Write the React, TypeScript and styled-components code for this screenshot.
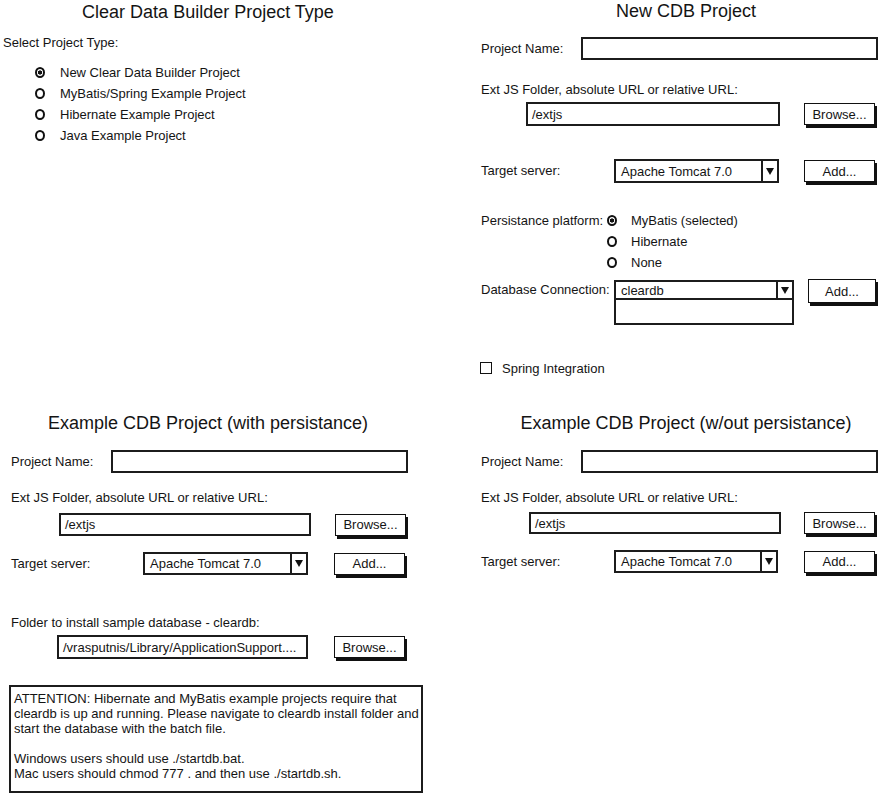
import React from 'react';
import styled, { createGlobalStyle } from 'styled-components';

const GlobalStyle = createGlobalStyle`
  html, body {
    margin: 0;
    padding: 0;
    background: #fff;
  }
  body {
    font-family: "Liberation Sans", Arial, sans-serif;
    color: #141414;
  }
`;

const Page = styled.div`
  display: grid;
  grid-template-columns: 470px 423px;
  grid-template-rows: 400px 393px;
  width: 893px;
  height: 793px;
  overflow: hidden;
`;

const Panel = styled.section`
  display: flex;
  flex-direction: column;
  min-width: 0;
`;

const Title = styled.h2<{ $width: number; $top?: number }>`
  margin: ${p => p.$top ?? 0}px 0 0;
  width: ${p => p.$width}px;
  font-size: 18px;
  font-weight: normal;
  line-height: 22px;
  text-align: center;
  white-space: nowrap;
`;

const Fields = styled.div<{ $indent?: number }>`
  display: flex;
  flex-direction: column;
  padding-left: ${p => p.$indent ?? 11}px;
`;

const Row = styled.div<{ $top: number; $indent?: number; $start?: boolean }>`
  display: flex;
  align-items: ${p => (p.$start ? 'flex-start' : 'center')};
  margin-top: ${p => p.$top}px;
  padding-left: ${p => p.$indent ?? 0}px;
`;

const Label = styled.div<{ $width: number; $line?: number }>`
  flex: 0 0 ${p => p.$width}px;
  font-size: 13px;
  line-height: ${p => p.$line ?? 16}px;
  white-space: nowrap;
`;

const Caption = styled.div<{ $top: number }>`
  margin-top: ${p => p.$top}px;
  font-size: 13px;
  line-height: 16px;
  white-space: nowrap;
`;

const TextBox = styled.div<{ $width: number; $height?: number }>`
  box-sizing: border-box;
  width: ${p => p.$width}px;
  height: ${p => p.$height ?? 23}px;
  border: 2px solid #1c1c1c;
  padding: 0 4px;
  display: flex;
  align-items: center;
  font-size: 13px;
  background: #fff;
  white-space: nowrap;
  overflow: hidden;
`;

const Button = styled.button<{ $gap: number; $width?: number; $height?: number; $top?: number }>`
  box-sizing: border-box;
  width: ${p => p.$width ?? 71}px;
  height: ${p => p.$height ?? 22}px;
  margin: ${p => p.$top ?? 0}px 0 0 ${p => p.$gap}px;
  padding: 0;
  border: 1.5px solid #111;
  box-shadow: 2px 3px 0 #111;
  background: #fff;
  font-family: inherit;
  font-size: 13px;
  color: #141414;
`;

const Select = styled.div<{ $width: number; $height?: number }>`
  box-sizing: border-box;
  width: ${p => p.$width}px;
  height: ${p => p.$height ?? 23}px;
  border: 2px solid #1c1c1c;
  display: flex;
  font-size: 13px;
  background: #fff;
`;

const SelectValue = styled.span`
  flex: 1;
  display: flex;
  align-items: center;
  padding-left: 5px;
  white-space: nowrap;
`;

const SelectArrow = styled.span`
  flex: 0 0 14px;
  border-left: 2px solid #1c1c1c;
  display: flex;
  align-items: center;
  justify-content: center;

  &::before {
    content: '';
    width: 0;
    height: 0;
    border-left: 4.5px solid transparent;
    border-right: 4.5px solid transparent;
    border-top: 7px solid #111;
  }
`;

const ListBox = styled.div<{ $width: number }>`
  box-sizing: border-box;
  width: ${p => p.$width}px;
  height: 25px;
  border: 2px solid #1c1c1c;
  border-top: none;
`;

const Stack = styled.div`
  display: flex;
  flex-direction: column;
`;

const RadioGroup = styled.div<{ $top?: number; $indent?: number }>`
  display: flex;
  flex-direction: column;
  margin-top: ${p => p.$top ?? 0}px;
  padding-left: ${p => p.$indent ?? 0}px;
`;

const RadioRow = styled.div`
  display: flex;
  align-items: center;
  height: 21px;
  font-size: 13px;
  white-space: nowrap;
`;

const RadioMark = styled.span<{ $checked?: boolean; $gap: number }>`
  box-sizing: border-box;
  flex: 0 0 10px;
  height: 11px;
  margin-right: ${p => p.$gap}px;
  border: 2.5px solid #111;
  border-radius: 50%;
  background: ${p =>
    p.$checked ? 'radial-gradient(circle, #111 0 1.8px, transparent 2.4px)' : 'transparent'};
`;

const CheckRow = styled.label`
  display: flex;
  align-items: center;
  margin: 37px 0 0 -1px;
  height: 12px;
  font-size: 13px;
`;

const CheckMark = styled.span`
  box-sizing: border-box;
  width: 12px;
  height: 12px;
  margin-right: 10px;
  border: 1.5px solid #111;
`;

const Notice = styled.div`
  box-sizing: border-box;
  margin: 26px 0 0 -2px;
  width: 414px;
  height: 108px;
  padding: 4px 0 0 3px;
  border: 2px solid #1c1c1c;
  font-size: 13px;
  line-height: 15px;
`;

function Dropdown({ width, height, value }: { width: number; height?: number; value: string }) {
  return (
    <Select $width={width} $height={height}>
      <SelectValue>{value}</SelectValue>
      <SelectArrow />
    </Select>
  );
}

function Radios({ items, gap, checked }: { items: string[]; gap: number; checked: number }) {
  return (
    <>
      {items.map((item, i) => (
        <RadioRow key={item}>
          <RadioMark $gap={gap} $checked={i === checked} />
          {item}
        </RadioRow>
      ))}
    </>
  );
}

export default function App() {
  return (
    <Page>
      <GlobalStyle />

      <Panel>
        <Title $width={416} $top={1}>Clear Data Builder Project Type</Title>
        <Fields $indent={3}>
          <Caption $top={12}>Select Project Type:</Caption>
          <RadioGroup $top={11} $indent={32}>
            <Radios
              gap={15}
              checked={0}
              items={[
                'New Clear Data Builder Project',
                'MyBatis/Spring Example Project',
                'Hibernate Example Project',
                'Java Example Project',
              ]}
            />
          </RadioGroup>
        </Fields>
      </Panel>

      <Panel>
        <Title $width={432}>New CDB Project</Title>
        <Fields>
          <Row $top={15}>
            <Label $width={100}>Project Name:</Label>
            <TextBox $width={297} />
          </Row>
          <Caption $top={22}>Ext JS Folder, absolute URL or relative URL:</Caption>
          <Row $top={4} $indent={45}>
            <TextBox $width={254} $height={24}>/extjs</TextBox>
            <Button $gap={24}>Browse...</Button>
          </Row>
          <Row $top={33}>
            <Label $width={133}>Target server:</Label>
            <Dropdown width={165} height={24} value="Apache Tomcat 7.0" />
            <Button $gap={25}>Add...</Button>
          </Row>
          <Row $top={27} $start>
            <Label $width={126} $line={21}>Persistance platform:</Label>
            <RadioGroup>
              <Radios gap={14} checked={0} items={['MyBatis (selected)', 'Hibernate', 'None']} />
            </RadioGroup>
          </Row>
          <Row $top={7} $start>
            <Label $width={133} $line={20}>Database Connection:</Label>
            <Stack>
              <Dropdown width={180} height={20} value="cleardb" />
              <ListBox $width={180} />
            </Stack>
            <Button $gap={14} $width={68} $height={24} $top={-1}>Add...</Button>
          </Row>
          <CheckRow>
            <CheckMark />
            Spring Integration
          </CheckRow>
        </Fields>
      </Panel>

      <Panel>
        <Title $width={416} $top={12}>Example CDB Project (with persistance)</Title>
        <Fields>
          <Row $top={16}>
            <Label $width={100}>Project Name:</Label>
            <TextBox $width={297} />
          </Row>
          <Caption $top={17}>Ext JS Folder, absolute URL or relative URL:</Caption>
          <Row $top={7} $indent={48}>
            <TextBox $width={252}>/extjs</TextBox>
            <Button $gap={24}>Browse...</Button>
          </Row>
          <Row $top={16}>
            <Label $width={132}>Target server:</Label>
            <Dropdown width={165} value="Apache Tomcat 7.0" />
            <Button $gap={26}>Add...</Button>
          </Row>
          <Caption $top={40}>Folder to install sample database - cleardb:</Caption>
          <Row $top={4} $indent={46}>
            <TextBox $width={251} $height={24}>/vrasputnis/Library/ApplicationSupport....</TextBox>
            <Button $gap={26}>Browse...</Button>
          </Row>
          <Notice>
            ATTENTION: Hibernate and MyBatis example projects require that
            <br />
            cleardb is up and running. Please navigate to cleardb install folder and
            <br />
            start the database with the batch file.
            <br />
            <br />
            Windows users should use ./startdb.bat.
            <br />
            Mac users should chmod 777 . and then use ./startdb.sh.
          </Notice>
        </Fields>
      </Panel>

      <Panel>
        <Title $width={432} $top={12}>Example CDB Project (w/out persistance)</Title>
        <Fields>
          <Row $top={16}>
            <Label $width={100}>Project Name:</Label>
            <TextBox $width={297} />
          </Row>
          <Caption $top={17}>Ext JS Folder, absolute URL or relative URL:</Caption>
          <Row $top={6} $indent={48}>
            <TextBox $width={252} $height={22}>/extjs</TextBox>
            <Button $gap={23}>Browse...</Button>
          </Row>
          <Row $top={16}>
            <Label $width={133}>Target server:</Label>
            <Dropdown width={164} value="Apache Tomcat 7.0" />
            <Button $gap={26}>Add...</Button>
          </Row>
        </Fields>
      </Panel>
    </Page>
  );
}
